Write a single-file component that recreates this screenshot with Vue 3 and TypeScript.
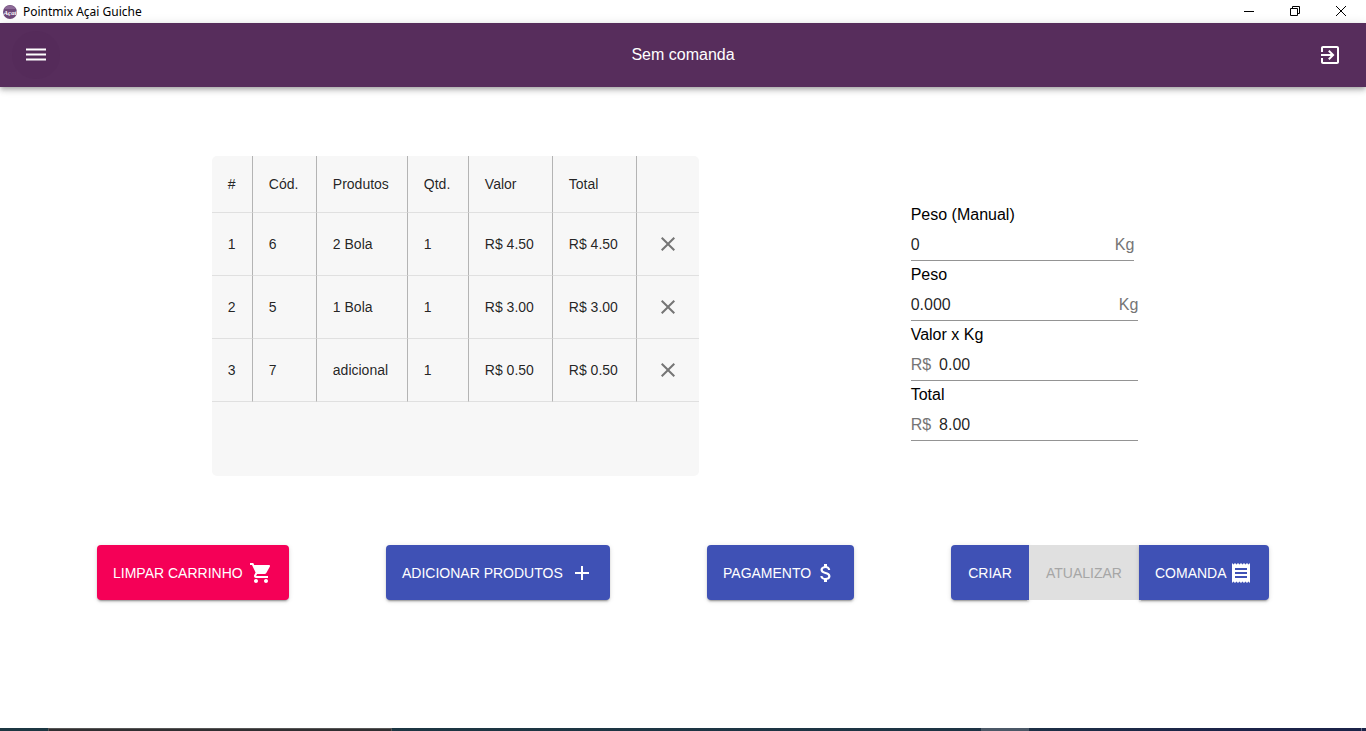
<script setup lang="ts">
import { computed, ref } from 'vue'

interface CartItem {
  id: number
  code: string
  name: string
  quantity: number
  price: number
}

const items = ref<CartItem[]>([
  { id: 1, code: '6', name: '2 Bola', quantity: 1, price: 4.5 },
  { id: 2, code: '5', name: '1 Bola', quantity: 1, price: 3 },
  { id: 3, code: '7', name: 'adicional', quantity: 1, price: 0.5 },
])

const manualWeight = ref('0')
const weight = ref('0.000')
const pricePerKg = ref('0.00')

const total = computed(() =>
  items.value.reduce((sum, item) => sum + item.price * item.quantity, 0).toFixed(2),
)

function money(value: number): string {
  return `R$ ${value.toFixed(2)}`
}

function removeItem(id: number): void {
  items.value = items.value.filter((item) => item.id !== id)
}

function clearCart(): void {
  items.value = []
}
</script>

<template>
  <div class="window">
    <div class="titlebar">
      <svg class="logo" viewBox="0 0 16 16" aria-hidden="true">
        <circle cx="8" cy="8" r="7" fill="#6f4a7a" />
        <path d="M2 5a7 7 0 0 1 12 0z" fill="#8d6b98" />
        <text x="8" y="11" text-anchor="middle" class="logo-text">Açaí</text>
      </svg>
      <span class="window-title">Pointmix Açai Guiche</span>
      <div class="window-controls">
        <button type="button" aria-label="Minimizar">
          <svg viewBox="0 0 10 10"><path d="M0 5.5h10" /></svg>
        </button>
        <button type="button" aria-label="Restaurar">
          <svg viewBox="0 0 10 10"><path d="M.5 2.5h7v7h-7zM2.500 2.500v-2h7v7h-2" /></svg>
        </button>
        <button type="button" aria-label="Fechar">
          <svg viewBox="0 0 10 10"><path d="M0 0l10 10M10 0L0 10" /></svg>
        </button>
      </div>
    </div>

    <header class="appbar">
      <button type="button" class="round menu" aria-label="Menu">
        <svg viewBox="0 0 24 24">
          <path d="M2 5.500h20v2H2zM2 10.500h20v2H2zM2 15.500h20v2H2z" />
        </svg>
      </button>
      <h1>Sem comanda</h1>
      <button type="button" class="round" aria-label="Sair">
        <svg viewBox="0 0 24 24">
          <path d="M10.090 15.590L11.500 17l5-5-5-5-1.410 1.410L12.670 11H3v2h9.670l-2.580 2.590zM19 3H5c-1.110 0-2 .9-2 2v4h2V5h14v14H5v-4H3v4c0 1.100.89 2 2 2h14c1.100 0 2-.9 2-2V5c0-1.100-.9-2-2-2z" />
        </svg>
      </button>
    </header>

    <main>
      <section class="content">
        <div class="cart">
          <table>
            <colgroup>
              <col class="c-num" />
              <col class="c-code" />
              <col class="c-name" />
              <col class="c-qty" />
              <col class="c-money" />
              <col class="c-money" />
              <col />
            </colgroup>
            <thead>
              <tr>
                <th scope="col">#</th>
                <th scope="col">Cód.</th>
                <th scope="col">Produtos</th>
                <th scope="col">Qtd.</th>
                <th scope="col">Valor</th>
                <th scope="col">Total</th>
                <td></td>
              </tr>
            </thead>
            <tbody>
              <tr v-for="(item, index) in items" :key="item.id">
                <td>{{ index + 1 }}</td>
                <td>{{ item.code }}</td>
                <td>{{ item.name }}</td>
                <td>{{ item.quantity }}</td>
                <td>{{ money(item.price) }}</td>
                <td>{{ money(item.price * item.quantity) }}</td>
                <td class="action">
                  <button type="button" :aria-label="`Remover ${item.name}`" @click="removeItem(item.id)">
                    <svg viewBox="0 0 24 24">
                      <path d="M19 6.410L17.590 5 12 10.590 6.410 5 5 6.410 10.590 12 5 17.590 6.410 19 12 13.410 17.590 19 19 17.590 13.410 12z" />
                    </svg>
                  </button>
                </td>
              </tr>
            </tbody>
          </table>
        </div>

        <form class="fields" @submit.prevent>
          <label for="manual">Peso (Manual)</label>
          <div class="field manual">
            <input id="manual" v-model="manualWeight" type="text" />
            <span class="unit">Kg</span>
          </div>
          <label for="weight">Peso</label>
          <div class="field">
            <input id="weight" v-model="weight" type="text" />
            <span class="unit">Kg</span>
          </div>
          <label for="price">Valor x Kg</label>
          <div class="field">
            <span class="unit">R$</span>
            <input id="price" v-model="pricePerKg" type="text" />
          </div>
          <label for="total">Total</label>
          <div class="field">
            <span class="unit">R$</span>
            <input id="total" :value="total" type="text" readonly />
          </div>
        </form>
      </section>

      <section class="actions">
        <button type="button" class="btn danger clear" @click="clearCart">
          Limpar carrinho
          <svg viewBox="0 0 24 24">
            <path d="M7 18c-1.100 0-1.990.9-1.990 2S5.900 22 7 22s2-.9 2-2-.9-2-2-2zM1 2v2h2l3.600 7.590-1.350 2.450c-.16.28-.25.61-.25.96 0 1.100.9 2 2 2h12v-2H7.420c-.14 0-.25-.11-.25-.25l.03-.12.9-1.630h7.450c.75 0 1.410-.41 1.750-1.030l3.580-6.490c.08-.14.12-.31.12-.48 0-.55-.45-1-1-1H5.210l-.94-2H1zm16 16c-1.100 0-1.990.9-1.990 2s.89 2 1.990 2 2-.9 2-2-.9-2-2-2z" />
          </svg>
        </button>
        <button type="button" class="btn add">
          Adicionar produtos
          <svg viewBox="0 0 24 24"><path d="M19 13h-6v6h-2v-6H5v-2h6V5h2v6h6v2z" /></svg>
        </button>
        <button type="button" class="btn pay">
          Pagamento
          <svg viewBox="0 0 24 24">
            <path d="M11.800 10.900c-2.270-.59-3-1.200-3-2.150 0-1.090 1.010-1.850 2.700-1.850 1.780 0 2.440.85 2.500 2.100h2.210c-.07-1.720-1.120-3.300-3.210-3.810V3h-3v2.160c-1.940.42-3.500 1.680-3.500 3.610 0 2.310 1.910 3.460 4.700 4.130 2.500.6 3 1.480 3 2.410 0 .69-.49 1.790-2.700 1.790-2.060 0-2.870-.92-2.980-2.100h-2.200c.12 2.190 1.760 3.420 3.680 3.830V21h3v-2.150c1.950-.37 3.500-1.500 3.500-3.550 0-2.840-2.430-3.810-4.700-4.400z" />
          </svg>
        </button>
        <div class="group">
          <button type="button" class="btn create">Criar</button>
          <button type="button" class="btn update" disabled>Atualizar</button>
          <button type="button" class="btn order">
            Comanda
            <svg viewBox="0 0 24 24">
              <path d="M18 17H6v-2h12v2zm0-4H6v-2h12v2zm0-4H6V7h12v2zM3 22l1.500-1.500L6 22l1.500-1.500L9 22l1.500-1.500L12 22l1.500-1.500L15 22l1.500-1.500L18 22l1.500-1.500L21 22V2l-1.500 1.500L18 2l-1.500 1.500L15 2l-1.500 1.500L12 2l-1.500 1.500L9 2 7.500 3.500 6 2 4.500 3.500 3 2v20z" />
            </svg>
          </button>
        </div>
      </section>
    </main>

    <div class="taskbar">
      <span class="task-search"></span>
      <span class="task-active"></span>
      <span class="task-end"></span>
    </div>
  </div>
</template>

<style>
body {
  margin: 0;
  background: #fff;
}
</style>

<style scoped>
.window {
  display: flex;
  flex-direction: column;
  min-height: 100vh;
  font-family: "Liberation Sans", Arial, sans-serif;
  font-size: 16px;
  color: #000;
}
button {
  margin: 0;
  padding: 0;
  border: 0;
  background: none;
  font: inherit;
  color: inherit;
  cursor: pointer;
}
svg {
  display: block;
  flex: none;
  width: 24px;
  height: 24px;
  fill: currentColor;
}
.titlebar {
  display: flex;
  align-items: center;
  height: 23px;
  padding: 0 2px;
  background: #fff;
}
.logo {
  width: 16px;
  height: 16px;
}
.logo-text {
  font: italic bold 7px "Liberation Serif", serif;
  fill: #fff;
}
.window-title {
  margin-left: 5px;
  font: 12px/16px "Noto Sans", "Open Sans", sans-serif;
}
.window-controls {
  display: flex;
  margin-left: auto;
}
.window-controls button {
  display: flex;
  justify-content: center;
  width: 46px;
  padding: 5px 0 7px;
}
.window-controls svg {
  width: 10px;
  height: 10px;
  fill: none;
  stroke: #000;
}
.appbar {
  display: flex;
  align-items: center;
  justify-content: space-between;
  height: 64px;
  padding: 0 12px;
  background: #572d5c;
  color: #fff;
  box-shadow: 0 2px 4px -1px rgba(0, 0, 0, 0.2), 0 4px 5px 0 rgba(0, 0, 0, 0.14),
    0 1px 10px 0 rgba(0, 0, 0, 0.12);
}
.appbar h1 {
  margin: 0;
  font-size: 16px;
  font-weight: 400;
  line-height: 24px;
}
.round {
  padding: 12px;
  border-radius: 50%;
}
.menu {
  background: #552b5a;
}
main {
  flex: 1;
  display: flex;
  flex-direction: column;
  gap: 69px;
  padding: 69px 0;
}
.content {
  display: grid;
  grid-template-columns: 2fr 1fr;
  align-items: center;
}
.cart {
  justify-self: center;
  width: 487px;
  height: 320px;
  overflow: auto;
  border-radius: 5px;
  background: #f7f7f7;
}
table {
  width: 100%;
  table-layout: fixed;
  border-collapse: separate;
  border-spacing: 0;
  font-size: 14px;
  line-height: 24px;
  color: rgba(0, 0, 0, 0.87);
}
.c-num {
  width: 41px;
}
.c-code {
  width: 64px;
}
.c-name {
  width: 91px;
}
.c-qty {
  width: 61px;
}
.c-money {
  width: 84px;
}
th,
td {
  box-sizing: border-box;
  height: 63px;
  padding: 0 0 0 16px;
  border-right: 1px solid #b4b4b4;
  border-bottom: 1px solid #e0e0e0;
  font-weight: 400;
  text-align: left;
  white-space: nowrap;
}
thead th,
thead td {
  height: 57px;
}
th:last-child,
td:last-child {
  border-right: 0;
}
.action {
  padding: 0;
}
.action button {
  display: block;
  margin: 0 auto;
  color: #757575;
}
.fields {
  width: 50%;
  padding-top: 10px;
}
.fields label {
  display: block;
  line-height: 28px;
}
.field {
  display: flex;
  align-items: center;
  gap: 8px;
  box-sizing: border-box;
  height: 32px;
  border-bottom: 1px solid #949494;
}
.manual {
  margin-right: 4px;
}
.field input {
  flex: 1;
  min-width: 0;
  padding: 0;
  border: 0;
  outline: 0;
  background: none;
  font: inherit;
  color: rgba(0, 0, 0, 0.87);
}
.unit {
  color: #757575;
}
.actions {
  display: flex;
  justify-content: space-evenly;
}
.btn {
  display: flex;
  align-items: center;
  justify-content: space-between;
  box-sizing: border-box;
  height: 55px;
  padding: 0 16px;
  border-radius: 4px;
  background: #3f51b5;
  color: #fff;
  font-size: 14px;
  text-transform: uppercase;
  white-space: nowrap;
  box-shadow: 0 3px 1px -2px rgba(0, 0, 0, 0.2), 0 2px 2px 0 rgba(0, 0, 0, 0.14),
    0 1px 5px 0 rgba(0, 0, 0, 0.12);
}
.danger {
  background: #f50057;
}
.clear {
  width: 192px;
}
.add {
  width: 224px;
}
.pay {
  width: 147px;
}
.group {
  display: flex;
}
.create {
  width: 78px;
  justify-content: center;
  border-radius: 4px 0 0 4px;
}
.update {
  width: 110px;
  justify-content: center;
  border-radius: 0;
  background: #e0e0e0;
  color: #a6a6a6;
  box-shadow: none;
  cursor: default;
}
.order {
  width: 130px;
  border-radius: 0 4px 4px 0;
}
.taskbar {
  display: flex;
  height: 3px;
  background: linear-gradient(90deg, #1c3742, #1d3444 70%, #1b2348 90%);
}
.task-search {
  box-sizing: border-box;
  width: 344px;
  margin-left: 48px;
  border: 1px solid #555;
  border-bottom: 0;
  background: #302e31;
}
.task-active {
  width: 48px;
  margin-left: auto;
  background: #4b5867;
}
.task-end {
  box-sizing: border-box;
  width: 333px;
  margin-right: 4px;
  border-right: 1px solid #68708a;
}
</style>
